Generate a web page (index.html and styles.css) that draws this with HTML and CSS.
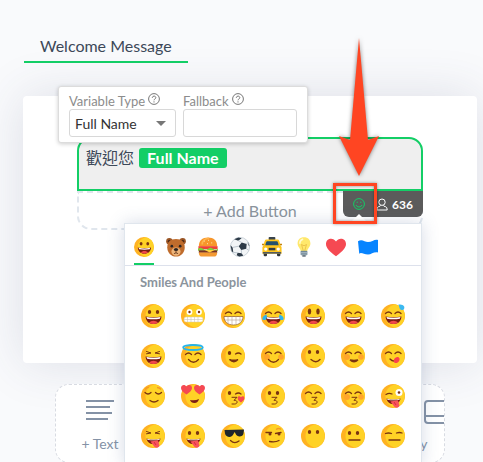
FILE: index.html
```html
<!DOCTYPE html>
<html lang="en">
<head>
  <meta charset="UTF-8">
  <meta name="viewport" content="width=device-width, initial-scale=1.0">
  <title>Welcome Message</title>
  <link rel="stylesheet" href="styles.css">
</head>
<body>
  <!-- shared emoji parts -->
  <svg class="sprite" aria-hidden="true">
    <symbol id="face" viewBox="0 0 24 24">
      <circle cx="12" cy="12" r="12" fill="#ffb222"/>
      <path d="M14 .2A12 12 0 0 1 14 23.800C8 22 4.500 18 4.500 12S8 2 14 .2Z" fill="#ffd226"/>
    </symbol>
    <symbol id="dots" viewBox="0 0 24 24">
      <ellipse cx="8.500" cy="8" rx="1.700" ry="2.100" fill="#7a3411"/>
      <ellipse cx="16.500" cy="8" rx="1.700" ry="2.100" fill="#7a3411"/>
    </symbol>
    <symbol id="arcs" viewBox="0 0 24 24">
      <path d="M4.500 9.500q3-3 6 0M14 9.500q3-3 6 0" class="line"/>
    </symbol>
    <symbol id="squint" viewBox="0 0 24 24">
      <path d="M5.500 7.500l4.500 1.500-4.500.8M18.500 7.500L14 9l4.500.8" class="line thin"/>
    </symbol>
    <symbol id="wink" viewBox="0 0 24 24">
      <ellipse cx="8.500" cy="9" rx="1.700" ry="2.100" fill="#7a3411"/>
      <path d="M14.500 10q3-2 5.500 0" class="line"/>
    </symbol>
    <symbol id="open" viewBox="0 0 24 24">
      <path d="M4.500 12.500q8 1.600 16 0c-.5 5-3.500 7.500-8 7.500s-7.500-2.500-8-7.500Z" fill="#7b1d13"/>
      <path d="M5.500 13q7 1.300 14 0l-.7 1.700q-6.300 1-12.600 0Z" fill="#fff"/>
      <path d="M8 18.700c2-2.700 7-2.700 9 0q-4.500 2.500-9 0Z" fill="#f0484a"/>
    </symbol>
    <symbol id="smile" viewBox="0 0 24 24">
      <path d="M7.500 15.500q5 5.500 10 0" class="line"/>
    </symbol>
    <symbol id="cheeks" viewBox="0 0 24 24">
      <circle cx="6" cy="13" r="3" fill="#ffa52b"/>
      <circle cx="20" cy="13" r="2.800" fill="#ffa52b"/>
    </symbol>
    <symbol id="kiss" viewBox="0 0 24 24">
      <path d="M11 13.300h5l-3 3c4-.4 4 3.700.5 3.700H11" class="line thin"/>
    </symbol>
    <symbol id="tongue" viewBox="0 0 24 24">
      <path d="M5.500 14.500q7 2 14 0c-.5 3.500-3 5.500-7 5.500s-6.500-2-7-5.500Z" fill="#7b1d13"/>
      <path d="M6 14.700q6.500 1.800 13 0l-.5 1q-6 1.300-12 0Z" fill="#fff"/>
      <path d="M9.500 17.500l7.500-1.200 1.300 4.700c.5 3-3.300 3.300-5 1.700Z" fill="#f9525b"/>
      <path d="M13 18l2 3" stroke="#d6303f" fill="none"/>
    </symbol>
    <symbol id="heart" viewBox="0 0 24 24">
      <path d="M12 22C4 16.500 0 12 0 7.500 0 0 9-1 12 4.500 15-1 24 0 24 7.500 24 12 20 16.500 12 22Z" fill="#f54952"/>
    </symbol>
    <symbol id="drop" viewBox="0 0 24 24">
      <path d="M17.500.5c4.500 0 6.500 1.500 5.700 4-.8 2.300-4 2-4.700-.5Z" fill="#3cb9f0"/>
    </symbol>
  </svg>

  <div class="page">
    <nav class="tabs">
      <a class="tab" href="#message">Welcome Message</a>
    </nav>

    <main class="card" id="message">
      <div class="bubble">
        <div class="message" contenteditable="true" role="textbox" aria-label="Message" spellcheck="false">歡迎您 <span class="tag">Full Name</span></div>
        <button class="add-button" type="button">+ Add Button</button>

        <div class="counter">
          <button class="icon-button" type="button" aria-label="Emoji">
            <svg class="smiley" viewBox="0 0 12 12"><circle cx="6" cy="6" r="5.400"/><path d="M3 7q.6 2 3 2t3-2"/><path d="M4.200 3.700v1.200M7.800 3.700v1.200"/></svg>
          </button>
          <svg class="person" viewBox="0 0 12 13"><circle cx="6" cy="4.200" r="3.200"/><path d="M4.500 7.300q0 1.200-2.300 1.500-1.400.3-1.400 3.200h10.400q0-2.900-1.400-3.200-2.300-.3-2.300-1.500"/></svg>
          <span>636</span>
        </div>

        <form class="variable">
          <div class="field">
            <label for="variable-type">Variable Type
              <svg class="help" viewBox="0 0 12 12"><circle cx="6" cy="6" r="5.400"/><path d="M4.300 4.800c0-2.300 3.500-2.200 3.500-.1C7.800 6 6 5.900 6 7.300M6 8.300v1.200"/></svg>
            </label>
            <div class="select">
              <select id="variable-type">
                <option>Full Name</option>
                <option>First Name</option>
                <option>Last Name</option>
              </select>
            </div>
          </div>
          <div class="field">
            <label for="fallback">Fallback
              <svg class="help" viewBox="0 0 12 12"><circle cx="6" cy="6" r="5.400"/><path d="M4.300 4.800c0-2.300 3.500-2.200 3.500-.1C7.800 6 6 5.900 6 7.300M6 8.300v1.200"/></svg>
            </label>
            <input id="fallback" type="text">
          </div>
        </form>

        <section class="picker">
          <div class="categories">
            <button class="category active" type="button" aria-label="Smiles And People"><svg viewBox="0 0 24 24"><use href="#face"/><use href="#dots"/><use href="#open"/></svg></button>
            <button class="category" type="button" aria-label="Animals"><svg viewBox="0 0 24 24"><circle cx="4" cy="5" r="3.800" fill="#9a5525"/><circle cx="20" cy="5" r="3.800" fill="#9a5525"/><circle cx="4" cy="5" r="1.800" fill="#4e2a17"/><circle cx="20" cy="5" r="1.800" fill="#4e2a17"/><path d="M12 2.500c7 0 10.500 4 10.500 10S18 23.500 12 23.500 1.500 18.500 1.500 12.500 5 2.500 12 2.500Z" fill="#bf6c2c"/><ellipse cx="12" cy="17.500" rx="5.500" ry="5" fill="#eeb57a"/><circle cx="7" cy="11" r="1.600" fill="#2b2523"/><circle cx="17" cy="11" r="1.600" fill="#2b2523"/><ellipse cx="12" cy="15" rx="2.600" ry="1.900" fill="#2b2523"/><path d="M12 16v3M9.500 20q2.500-2 5 0" stroke="#5a3018" fill="none"/></svg></button>
            <button class="category" type="button" aria-label="Food"><svg viewBox="0 0 24 24"><path d="M1 11C1 4 5 .5 12 .5S23 4 23 11Z" fill="#f7962b"/><path d="M5 9C5 4 8 2 13 1.500" stroke="#ffb44b" stroke-width="2" fill="none"/><path d="M7 5h1M12 4h1M16 7h1M11 8h1" stroke="#ffe3a8" stroke-width="1.500"/><path d="M.5 11h23v3.500H.5Z" fill="#ef4136"/><path d="M0 14q3-2 6 0t6 0 6 0 6 0v2.500H0Z" fill="#84cc3c"/><path d="M1 16h22v3H1Z" fill="#7a3320"/><path d="M8 15.500h12l-6 3Z" fill="#ffd43b"/><path d="M1 18.500h22c0 4-2 5-4 5H5c-2 0-4-1-4-5Z" fill="#f49a32"/></svg></button>
            <button class="category" type="button" aria-label="Sport"><svg viewBox="0 0 24 24"><circle cx="12" cy="12" r="11.500" fill="#f2f5f7" stroke="#c3ccd4"/><path d="M14 6.500l6 2-.5 5.500-6 1.500-3-4.500ZM5 2.800l5-2.200 4 .8-4 3ZM.6 10l2.600 2.500L4 18.500l-2-1.500ZM9 19l5 .5 2 3-5 1-3-1.500ZM22 6l1.400 5-1.200-1Z" fill="#2d3a47"/><path d="M14 6.500L10 4.400M10.500 11l-7.300 1.500M13.500 15.500l.5 4M19.500 14l3 2M20 8.500l2-2.500M9 19l-5-.5" stroke="#b2bdc7" fill="none"/></svg></button>
            <button class="category" type="button" aria-label="Travel"><svg viewBox="0 0 24 24"><rect x="8" y="0" width="8" height="4" rx="1" fill="#38434c"/><rect x="2" y="18" width="4" height="5" rx="1" fill="#30373d"/><rect x="18" y="18" width="4" height="5" rx="1" fill="#30373d"/><path d="M5 3h14q2 0 3 7l1.500 2v8H.5v-8L2 10q1-7 3-7Z" fill="#ffc61f"/><path d="M6 5h12q1 0 2 5H4q1-5 2-5Z" fill="#24516d"/><path d="M0 9h2.500M21.500 9H24" stroke="#c4850b" stroke-width="2"/><circle cx="4.500" cy="14.500" r="2" fill="#fff"/><circle cx="19.500" cy="14.500" r="2" fill="#fff"/><path d="M8 13h8v3H8Z" fill="#343c43"/><path d="M1 19h22" stroke="#505a62" stroke-width="2"/></svg></button>
            <button class="category" type="button" aria-label="Objects"><svg viewBox="0 0 24 24"><path d="M12 .3c5 0 7.700 3.200 7.700 7.600 0 4-3.500 6-3.700 9H8c-.2-3-3.700-5-3.700-9C4.300 3.500 7 .3 12 .3Z" fill="#ffe86b"/><path d="M7 8c0-3 1.500-5 4-5.500" stroke="#fffad1" stroke-width="2" fill="none"/><path d="M9 9l2 7M15 9l-2 7M9 9l3 1.500L15 9" stroke="#e3b03c" stroke-width=".8" fill="none"/><rect x="8" y="16.500" width="8" height="5.500" rx="1" fill="#6d8594"/><path d="M8 18.500h8M8 20.500h8" stroke="#aebdc7"/><path d="M10 22h4v1.500h-4Z" fill="#394b58"/></svg></button>
            <button class="category" type="button" aria-label="Symbols"><svg viewBox="0 0 24 24"><use href="#heart" y="1"/></svg></button>
            <button class="category" type="button" aria-label="Flags"><svg viewBox="0 0 24 24"><path d="M0 5c5-3 8 1 12 1 5 0 8-4 12-2.500v15c-5-1-8 2.500-12 2.500-5 0-8-3-10.500-1Z" fill="#0784ff"/></svg></button>
          </div>
          <h2 class="group-title">Smiles And People</h2>
          <div class="emojis">
            <!-- row 1 -->
            <button class="emoji" type="button" aria-label="Grinning"><svg viewBox="0 0 24 24"><use href="#face"/><use href="#dots"/><use href="#open"/></svg></button>
            <button class="emoji" type="button" aria-label="Grimacing"><svg viewBox="0 0 24 24"><use href="#face"/><circle cx="8.500" cy="8" r="2.900" fill="#fff"/><circle cx="18" cy="8" r="2.900" fill="#fff"/><circle cx="8.500" cy="8" r="1.200" fill="#7a3411"/><circle cx="18" cy="8" r="1.200" fill="#7a3411"/><rect x="3" y="13" width="19" height="5" rx="2" fill="#fff" stroke="#d9c9a5" stroke-width=".5"/><path d="M3 15.500h19M6.500 13v5M10 13v5M13.500 13v5M17 13v5" stroke="#c9c6bd" stroke-width=".6"/></svg></button>
            <button class="emoji" type="button" aria-label="Beaming"><svg viewBox="0 0 24 24"><use href="#face"/><use href="#arcs"/><path d="M3 12.500h19c0 5-3.500 8.500-9.500 8.500S3 17.500 3 12.500Z" fill="#fff" stroke="#8f5524" stroke-width=".7"/><path d="M3.500 16h18M7 12.500v7M11 12.500V21M15 12.500V21M19 12.500v6" stroke="#b8a38e" stroke-width=".6"/></svg></button>
            <button class="emoji" type="button" aria-label="Tears of joy"><svg viewBox="0 0 24 24"><use href="#face"/><use href="#arcs"/><use href="#open"/><path d="M5.500 10.500c1 4-.5 6-3 5.500-2-.5-1.500-4 3-5.500ZM18.500 10.500c-1 4 .5 6 3 5.500 2-.5 1.500-4-3-5.500Z" fill="#2eb4ee"/></svg></button>
            <button class="emoji" type="button" aria-label="Big eyes"><svg viewBox="0 0 24 24"><use href="#face"/><ellipse cx="8.500" cy="7.500" rx="1.700" ry="2.900" fill="#7a3411"/><ellipse cx="17" cy="7.500" rx="1.700" ry="2.900" fill="#7a3411"/><use href="#open"/></svg></button>
            <button class="emoji" type="button" aria-label="Smiling"><svg viewBox="0 0 24 24"><use href="#face"/><use href="#arcs"/><use href="#open"/></svg></button>
            <button class="emoji" type="button" aria-label="Sweat"><svg viewBox="0 0 24 24"><use href="#face"/><use href="#arcs"/><use href="#open"/><use href="#drop"/></svg></button>
            <!-- row 2 -->
            <button class="emoji" type="button" aria-label="Laughing"><svg viewBox="0 0 24 24"><use href="#face"/><use href="#squint"/><use href="#open"/></svg></button>
            <button class="emoji" type="button" aria-label="Halo"><svg viewBox="0 0 24 24"><use href="#face"/><use href="#arcs" y="1"/><use href="#smile"/><ellipse cx="12" cy="3.500" rx="9.800" ry="2.500" fill="none" stroke="#27b6ed" stroke-width="1.800"/></svg></button>
            <button class="emoji" type="button" aria-label="Winking"><svg viewBox="0 0 24 24"><use href="#face"/><use href="#wink"/><path d="M8.500 15.500q4.500 4.500 8.500 0-4 1.500-8.500 0Z" class="line"/></svg></button>
            <button class="emoji" type="button" aria-label="Blushing"><svg viewBox="0 0 24 24"><use href="#face"/><use href="#cheeks"/><use href="#arcs"/><use href="#smile"/></svg></button>
            <button class="emoji" type="button" aria-label="Slight smile"><svg viewBox="0 0 24 24"><use href="#face"/><use href="#dots"/><path d="M10 15.500q5 4.500 9 0" class="line"/></svg></button>
            <button class="emoji" type="button" aria-label="Relaxed"><svg viewBox="0 0 24 24"><use href="#face"/><use href="#cheeks"/><use href="#arcs"/><path d="M9 16q4 3.500 8 0-4 1-8 0Z" class="line"/></svg></button>
            <button class="emoji" type="button" aria-label="Yum"><svg viewBox="0 0 24 24"><use href="#face"/><use href="#arcs"/><path d="M9 15q3 3.500 8 1" class="line"/><path d="M13 15.500c1-3 5-3.500 5.500-1s-2 5-4.500 4.500q-1.800-.8-1-3.500Z" fill="#f9424d"/></svg></button>
            <!-- row 3 -->
            <button class="emoji" type="button" aria-label="Relieved"><svg viewBox="0 0 24 24"><use href="#face"/><path d="M4 5.500q2-2.500 4-2M16 3.500q2.500 0 4 2" stroke="#f49a24" stroke-width="1.300" fill="none"/><path d="M4 8.500q3 3 6 0M14.500 8.500q3 3 6 0M9 16.500q4 3 8 0" class="line"/></svg></button>
            <button class="emoji" type="button" aria-label="Heart eyes"><svg viewBox="0 0 24 24"><use href="#face"/><use href="#heart" x="0" width="11" height="12"/><use href="#heart" x="13" width="11" height="12"/><path d="M9 16q5 1 9-1-1 4-4.500 4T9 16Z" fill="#7b1d13"/></svg></button>
            <button class="emoji" type="button" aria-label="Blowing a kiss"><svg viewBox="0 0 24 24"><use href="#face"/><use href="#wink"/><use href="#kiss"/><use href="#heart" x="16.500" y="12" width="7" height="7"/></svg></button>
            <button class="emoji" type="button" aria-label="Kissing"><svg viewBox="0 0 24 24"><use href="#face"/><use href="#dots" y="1"/><use href="#kiss"/></svg></button>
            <button class="emoji" type="button" aria-label="Kissing with smiling eyes"><svg viewBox="0 0 24 24"><use href="#face"/><use href="#arcs"/><use href="#kiss"/></svg></button>
            <button class="emoji" type="button" aria-label="Kissing with closed eyes"><svg viewBox="0 0 24 24"><use href="#face"/><use href="#cheeks"/><use href="#arcs"/><use href="#kiss"/></svg></button>
            <button class="emoji" type="button" aria-label="Zany"><svg viewBox="0 0 24 24"><use href="#face"/><path d="M5 10.500q3-2 6-.5" class="line"/><circle cx="18" cy="8.500" r="3.500" fill="#fff"/><circle cx="18" cy="8.500" r="1.300" fill="#7a3411"/><use href="#tongue"/></svg></button>
            <!-- row 4 -->
            <button class="emoji" type="button" aria-label="Squinting with tongue"><svg viewBox="0 0 24 24"><use href="#face"/><use href="#squint"/><use href="#tongue"/></svg></button>
            <button class="emoji" type="button" aria-label="Tongue out"><svg viewBox="0 0 24 24"><use href="#face"/><use href="#dots" y="1"/><use href="#tongue"/></svg></button>
            <button class="emoji" type="button" aria-label="Sunglasses"><svg viewBox="0 0 24 24"><use href="#face"/><path d="M3.500 6l19.500-.5-.5 4c-.3 3.500-6.500 4-7.800.5l-1-2-1.500 2.500C10.500 14.500 4.500 13 4 9.500Z" fill="#20262b"/><path d="M9.500 16.500q4 4 8.500.5" class="line"/></svg></button>
            <button class="emoji" type="button" aria-label="Smirking"><svg viewBox="0 0 24 24"><use href="#face"/><path d="M15 5.500q3-2 5 0" stroke="#f49a24" stroke-width="1.300" fill="none"/><path d="M5 8.500h5.500M14.500 9.500l5.500-1M8.500 17.500q6 1 9.500-1" class="line"/><circle cx="9" cy="10" r="1.500" fill="#7a3411"/><circle cx="18" cy="10" r="1.500" fill="#7a3411"/></svg></button>
            <button class="emoji" type="button" aria-label="No mouth"><svg viewBox="0 0 24 24"><use href="#face"/><use href="#dots"/></svg></button>
            <button class="emoji" type="button" aria-label="Neutral"><svg viewBox="0 0 24 24"><use href="#face"/><use href="#dots" y="1"/><path d="M8 16h11" class="line"/></svg></button>
            <button class="emoji" type="button" aria-label="Expressionless"><svg viewBox="0 0 24 24"><use href="#face"/><path d="M4.500 9.500q3-1 6 0M15.500 9q3-1 5.500 0M8 16h11" class="line"/></svg></button>
          </div>
        </section>

        <div class="highlight"></div>
        <svg class="arrow" viewBox="0 0 44 144"><path d="M22 2l9 102 11-4-20 40L2 100l11 4Z"/></svg>
      </div>
    </main>

    <div class="blocks">
      <button class="block" type="button">
        <svg class="text-icon" viewBox="0 0 28 20"><path d="M0 1h28M0 7h24M0 13h26M0 19h22"/></svg>
        <span>+ Text</span>
      </button>
      <button class="block gallery" type="button">
        <svg class="gallery-icon" viewBox="0 0 96 24"><path d="M0 1h16q3 0 3 3v16q0 3-3 3H0M0 16h19"/><rect x="27" y="1" width="38" height="22" rx="3"/><path d="M27 16h38M96 1H76q-3 0-3 3v16q0 3 3 3h20M73 16h23"/></svg>
        <span>+ Gallery</span>
      </button>
    </div>
  </div>
</body>
</html>
```

FILE: styles.css
```css
* {
  box-sizing: border-box;
}

body {
  margin: 0;
  height: 100vh;
  overflow: hidden;
  background-color: #f9fafc;
  font-family: Lato, "Noto Sans CJK TC", sans-serif;
  font-size: 16px;
  color: #3c4858;
}

button, input, select {
  font-family: inherit;
  margin: 0;
}

button {
  border: none;
  padding: 0;
  background: none;
  cursor: pointer;
}

svg {
  display: block;
  flex: none;
}

.sprite {
  position: absolute;
  width: 0;
  height: 0;
}

.page {
  padding: 32px 6px 0 23px;
}

.tabs {
  display: flex;
  padding-left: 1px;
}

.tab {
  padding: 3px 16px 5px;
  line-height: 21px;
  border-bottom: 2px solid #13ce66;
  color: #3c4858;
  text-decoration: none;
}

/* Editor */
.card {
  min-height: 267px;
  margin-top: 33px;
  padding: 41px 54px 0;
  background-color: #fff;
  border-radius: 4px;
  box-shadow: 0 0 50px rgba(60, 70, 110, 0.15);
}

.bubble {
  position: relative;
}

.message {
  height: 54px;
  padding: 7px;
  line-height: 24px;
  background-color: #efefef;
  border: 2px solid #13ce66;
  border-radius: 14px 14px 0 0;
  outline: none;
}

.tag {
  display: inline-block;
  margin-left: 1px;
  padding: 0 8px;
  line-height: 20px;
  background-color: #13ce66;
  border-radius: 3px;
  color: #fff;
  font-weight: bold;
}

.add-button {
  display: block;
  width: 100%;
  height: 39px;
  border: 2px dashed #e0e6ed;
  border-radius: 0 0 14px 14px;
  font-size: 16px;
  color: #8b949d;
}

.counter {
  position: absolute;
  top: 54px;
  right: 0;
  display: flex;
  align-items: center;
  height: 26px;
  padding: 0 10px;
  background-color: #5b5b5b;
  border-radius: 0 0 6px 6px;
  color: #fff;
  font-size: 12px;
  font-weight: bold;
}

.smiley, .person, .help {
  width: 12px;
  height: 12px;
  fill: none;
  stroke: #13ce66;
}

.person {
  height: 13px;
  margin: 0 4px 0 11px;
  stroke: #fff;
}

.variable {
  position: absolute;
  top: -51px;
  left: -19px;
  z-index: 2;
  display: flex;
  gap: 7px;
  padding: 6px 10px 5px;
  background-color: #fff;
  border: 1px solid #dcdcdc;
  border-radius: 3px;
  box-shadow: 0 1px 4px rgba(0, 0, 0, 0.2);
}

.field label {
  display: flex;
  gap: 3px;
  line-height: 16px;
  font-size: 13px;
  color: #8c8c8c;
}

.help {
  stroke: #777;
}

.select {
  position: relative;
}

.select::after {
  content: "";
  position: absolute;
  top: 12px;
  right: 10px;
  border: 5px solid transparent;
  border-top-color: #777;
  border-bottom: none;
  pointer-events: none;
}

.field select, .field input {
  display: block;
  width: 107px;
  height: 28px;
  padding: 0 5px;
  background-color: #fff;
  border: 1px solid #d8d8d8;
  border-radius: 3px;
  outline: none;
  font-size: 14px;
  color: #333;
  appearance: none;
}

.field input {
  width: 114px;
}

/* Emoji picker */
.picker {
  position: absolute;
  top: 86px;
  left: 47px;
  right: 1px;
  z-index: 1;
  padding-bottom: 16px;
  background-color: #fff;
  border: 1px solid #e0e6ed;
  box-shadow: 0 0 16px rgba(70, 90, 140, 0.22);
}

.picker::before {
  content: "";
  position: absolute;
  top: -10px;
  right: 53px;
  border: 9px solid transparent;
  border-top: none;
  border-bottom-color: #fff;
}

.categories {
  display: flex;
  gap: 12px;
  padding: 0 9px;
  border-bottom: 1px solid #dde1ec;
}

.category {
  padding: 13px 0 6px;
  border-bottom: 2px solid transparent;
}

.category.active {
  border-bottom-color: #13ce66;
}

.category svg {
  width: 20px;
  height: 20px;
}

.group-title {
  margin: 0;
  padding: 7px 15px 9px;
  line-height: 18px;
  font-size: 13px;
  color: #8b949d;
}

.emojis {
  display: grid;
  grid-template-columns: repeat(7, 24px);
  gap: 16px;
  padding: 4px 16px 0;
}

.emoji svg {
  width: 24px;
  height: 24px;
}

.line {
  fill: none;
  stroke: #7a3411;
  stroke-width: 1.3px;
  stroke-linecap: round;
}

.line.thin {
  stroke-width: 1px;
}

/* Callout marks */
.highlight {
  position: absolute;
  top: 46px;
  right: 46px;
  z-index: 3;
  width: 44px;
  height: 41px;
  border: 3px solid #ff4522;
  box-shadow: 0 0 3px rgba(0, 0, 0, 0.4), inset 0 0 3px rgba(0, 0, 0, 0.4);
  pointer-events: none;
}

.arrow {
  position: absolute;
  top: -101px;
  right: 42px;
  z-index: 3;
  width: 44px;
  height: 144px;
  overflow: visible;
  fill: #ff4522;
  filter: drop-shadow(0 0 2px rgba(0, 0, 0, 0.5));
  pointer-events: none;
}

/* Block list */
.blocks {
  display: flex;
  justify-content: space-between;
  height: 79px;
  margin: 21px 32px 0;
  overflow: hidden;
  background-color: #fff;
  border: 1px dashed #d8dbe2;
  border-radius: 14px;
}

.block {
  display: flex;
  flex-direction: column;
  align-items: center;
  justify-content: space-between;
  width: 88px;
  padding: 15px 0 9px;
  font-size: 14px;
  line-height: 18px;
  color: #8492a6;
}

.block.gallery {
  width: 96px;
  margin-right: -4px;
}

.text-icon, .gallery-icon {
  width: 28px;
  height: 20px;
  fill: none;
  stroke: #8492a6;
  stroke-width: 2px;
}

.gallery-icon {
  width: 96px;
  height: 24px;
}
```
